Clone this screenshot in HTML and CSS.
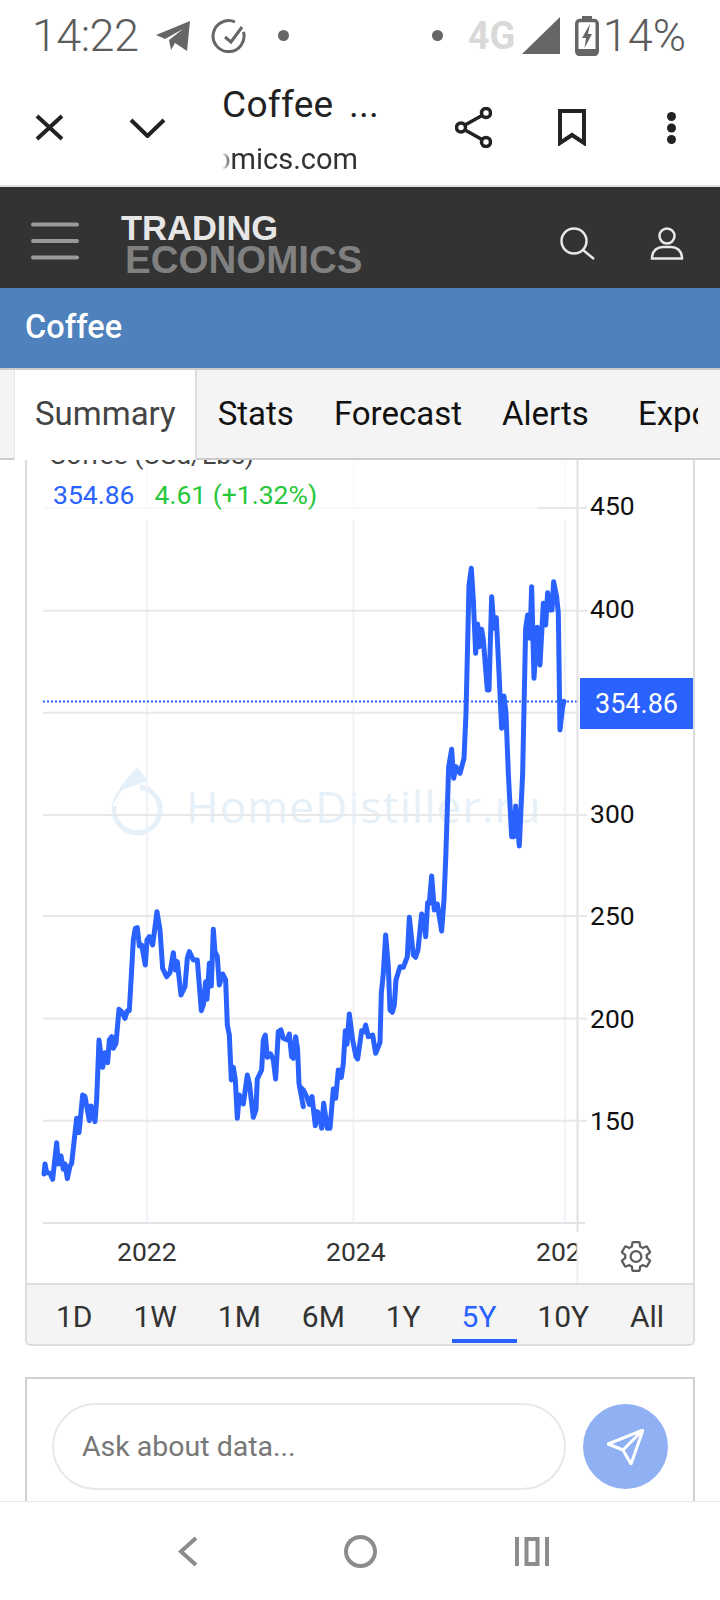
FILE: index.html
```html
<!DOCTYPE html>
<html>
	<head>
		<meta charset="utf-8" />
		<meta name="viewport" content="width=device-width,initial-scale=1" />
		<title>Coffee</title>
		<link rel="stylesheet" href="styles.css">
	</head>
	<body>
		<div class="status">
			<span class="time">14:22</span>
			<svg class="st-tele" width="34" height="30" viewBox="0 0 34 30"><path class="fill-g" d="M0 14L34 0L31 30L19 22L15 29L13 19L27 8L9 18Z"/></svg>
			<svg class="st-check" width="35" height="35" viewBox="0 0 35 35"><path class="line-g" d="M24 4A15.5 15.5 0 1 0 32.500 14"/><path class="line-g" d="M14 19L20 24L31 9"/></svg>
			<span class="dot st-dot1"></span>
			<span class="dot st-dot2"></span>
			<span class="net">4G</span>
			<svg class="st-signal" width="38" height="37" viewBox="0 0 38 37"><path class="fill-g" d="M38 0V37H0Z"/></svg>
			<svg class="st-batt" width="24" height="40" viewBox="0 0 24 40"><rect class="fill-g" x="7" y="0" width="10" height="5"/><rect class="line-g batt" x="1.750" y="4.500" width="20.500" height="34" rx="3"/><rect class="fill-g" x="2" y="33" width="20" height="6"/><path class="fill-g" d="M15 8L7 22H11L9.500 32L17 18H13Z"/></svg>
			<span class="pct">14%</span>
		</div>

		<div class="toolbar">
			<a class="tool-btn"><svg width="29" height="27" viewBox="0 0 29 27"><path class="line-d" d="M2 2L27 25M27 2L2 25"/></svg></a>
			<a class="tool-btn"><svg width="37" height="20" viewBox="0 0 37 20"><path class="line-d" d="M2 2L18.500 18L35 2"/></svg></a>
			<div class="title">
				<div class="title-main">Coffee ...</div>
				<div class="title-url"><span>tradingeconomics.com</span></div>
			</div>
			<a class="tool-btn share"><svg width="37" height="41" viewBox="0 0 37 41"><circle class="line-d thin" cx="31" cy="6" r="4.500"/><circle class="line-d thin" cx="6" cy="20.500" r="4.500"/><circle class="line-d thin" cx="31" cy="35" r="4.500"/><path class="line-d thin" d="M10 18L27 8.500M10 23L27 32.500"/></svg></a>
			<a class="tool-btn mark"><svg width="28" height="37" viewBox="0 0 28 37"><path class="line-d" d="M2 2H26V34L14 26L2 34Z"/></svg></a>
			<a class="tool-btn"><svg width="9" height="32" viewBox="0 0 9 32"><circle class="fill-d" cx="4.500" cy="4.500" r="4.500"/><circle class="fill-d" cx="4.500" cy="16" r="4.500"/><circle class="fill-d" cx="4.500" cy="27.500" r="4.500"/></svg></a>
		</div>

		<header class="site">
			<svg class="burger" width="48" height="38" viewBox="0 0 48 38"><path d="M2 2.500H46M2 19H46M2 35.500H46"/></svg>
			<div class="logo">
				<span class="logo-top">TRADING</span>
				<span class="logo-bot">ECONOMICS</span>
			</div>
			<svg class="site-search" width="35" height="33" viewBox="0 0 35 33"><circle cx="14" cy="14" r="12.500"/><path d="M23 23L34 32"/></svg>
			<svg class="site-user" width="34" height="33" viewBox="0 0 34 33"><circle cx="17" cy="9" r="7.500"/><path d="M2 31.500C2 23 8 20 13 20H21C26 20 32 23 32 31.500Z"/></svg>
		</header>

		<div class="bluebar">Coffee</div>

		<nav class="tabs">
			<div class="tab-list">
				<a class="tab on">Summary</a>
				<a class="tab">Stats</a>
				<a class="tab">Forecast</a>
				<a class="tab">Alerts</a>
				<a class="tab last">Export</a>
			</div>
		</nav>

		<main class="content">
			<section class="chart-card">
				<svg class="plot" width="666" height="823" viewBox="27 460 666 823">
					<!-- watermark -->
					<g class="wm">
						<path class="wm-ring" d="M140 787A23 23 0 1 1 114.500 806"/>
						<path class="wm-tip" d="M137 767L148 781L136 785L122 790L112 806C113 795 125 780 137 767Z"/>
						<text class="wm-text" x="186" y="823">HomeDistiller.ru</text>
					</g>
					<!-- vertical grid -->
					<path class="grid-v" d="M147 520V1222M353.500 520V1222M565 520V1222"/>
					<path class="grid-v faint" d="M147 460V506M353.500 460V506M565 460V506"/>
					<!-- horizontal grid -->
					<path class="grid-h faint" d="M43 508H537"/>
					<path class="grid-h" d="M537 508H587M43 610.700H587M43 712.700H587M43 815H587M43 916H587M43 1018.400H587M43 1120.700H587"/>
					<path class="axis-x" d="M43 1223H585"/>
					<line class="last-line" x1="43" y1="701.500" x2="578" y2="701.500"/>

					<!-- price -->
					<g transform="translate(30 880) scale(0.3333)">
						<polyline class="price" points="42,882 45,852 50,878 60,880 68,898 80,788 85,852 93,828 100,868 105,852 112,896 120,858 125,850 140,715 147,758 158,645 165,650 178,722 183,678 195,725 200,660 207,480 218,562 225,518 233,548 238,480 245,470 250,505 258,490 267,388 275,395 285,415 292,392 298,392 310,180 316,145 322,143 328,198 335,195 346,255 351,180 358,170 368,195 381,95 390,150 398,265 410,290 420,278 430,218 436,270 442,245 453,345 465,320 472,235 478,215 490,240 502,240 514,392 520,375 527,305 531,358 538,250 544,318 550,148 555,215 562,230 568,315 578,282 587,300 592,435 598,465 604,600 610,562 616,600 622,715 628,645 640,672 652,585 658,610 670,712 678,690 682,597 695,570 700,480 706,465 712,532 722,522 730,540 737,597 745,455 753,450 760,475 772,480 778,462 785,530 790,535 797,470 803,510 807,610 820,680"/>
					</g>
					<g transform="translate(300 860) scale(0.3333)">
						<polyline class="price" points="0,680 10,690 20,710 28,733 36,710 46,797 52,755 58,765 65,805 71,730 82,805 90,805 100,687 107,715 115,630 124,652 130,610 136,512 141,553 148,462 158,540 168,590 173,597 185,512 192,515 197,495 205,530 218,525 227,580 240,548 244,400 250,340 257,225 265,320 270,450 277,457 283,435 288,360 300,320 310,322 322,290 328,172 340,285 347,292 354,270 365,162 370,170 377,230 383,128 388,130 395,48 403,150 412,132 425,213 432,120 437,0"/>
					</g>
					<g transform="translate(400 540) scale(0.3333)">
						<polyline class="price" points="137,960 146,680 155,628 161,715 168,680 180,700 192,655 198,520 207,135 214,85 220,180 227,340 233,252 238,320 245,268 250,300 262,450 267,450 275,170 282,265 289,233 298,420 305,565 312,468 318,520 325,700 335,890 342,890 347,798 358,918 368,700 377,265 383,225 390,295 395,140 402,415 412,262 420,375 430,190 437,255 443,158 450,210 456,210 461,125 470,170 475,220 480,570 488,500 492,484"/>
					</g>

					<!-- legend -->
					<text class="lbl legend-name" x="49" y="464">Coffee (USd/Lbs)</text>
					<text class="lbl val" x="53" y="504">354.86</text>
					<text class="lbl chg" x="154.500" y="504">4.61 (+1.32%)</text>

					<!-- years -->
					<text class="lbl yr" x="117" y="1261">2022</text>
					<text class="lbl yr" x="326" y="1261">2024</text>
					<text class="lbl yr" x="536" y="1261">2026</text>

					<!-- price axis -->
					<rect class="axis-bg" x="577" y="460" width="116" height="823"/>
					<path class="axis-y" d="M577.500 460V1232"/>
					<path class="axis-y light" d="M577.500 1241V1283"/>
					<path class="grid-h" d="M577 508H587M577 610.700H587M577 815H587M577 916H587M577 1018.400H587M577 1120.700H587"/>
					<path class="axis-x" d="M578 1223H585"/>
					<text class="lbl px" x="590" y="515">450</text>
					<text class="lbl px" x="590" y="618">400</text>
					<text class="lbl px" x="590" y="823">300</text>
					<text class="lbl px" x="590" y="925">250</text>
					<text class="lbl px" x="590" y="1028">200</text>
					<text class="lbl px" x="590" y="1130">150</text>
					<rect class="tag" x="580" y="678" width="113" height="51"/>
					<text class="lbl tag-txt" x="636.500" y="713">354.86</text>

					<g transform="translate(618 1238.500) scale(1.5)">
						<path class="gear" d="M19.140 12.940c.04-.3.06-.61.06-.94 0-.32-.02-.64-.07-.94l2.030-1.580a.49.49 0 0 0 .12-.61l-1.920-3.320a.488.488 0 0 0-.59-.22l-2.390.96c-.5-.38-1.030-.7-1.620-.94l-.36-2.540a.484.484 0 0 0-.48-.41h-3.840c-.24 0-.43.17-.47.41l-.36 2.540c-.59.24-1.130.57-1.620.94l-2.390-.96c-.22-.08-.47 0-.59.22L2.740 8.870c-.12.21-.08.47.12.61l2.030 1.580c-.05.3-.09.63-.09.94s.02.64.07.94l-2.030 1.580a.49.49 0 0 0-.12.61l1.920 3.320c.12.22.37.29.59.22l2.390-.96c.5.38 1.030.7 1.620.94l.36 2.540c.05.24.24.41.48.41h3.840c.24 0 .44-.17.47-.41l.36-2.540c.59-.24 1.130-.56 1.620-.94l2.390.96c.22.08.47 0 .59-.22l1.920-3.320c.12-.22.07-.47-.12-.61l-2.010-1.580zM12 15.600c-1.980 0-3.600-1.620-3.600-3.600s1.620-3.600 3.600-3.600 3.600 1.620 3.600 3.600-1.620 3.600-3.600 3.600z"/>
					</g>
				</svg>
				<div class="ranges">
					<a class="range">1D</a>
					<a class="range">1W</a>
					<a class="range">1M</a>
					<a class="range">6M</a>
					<a class="range">1Y</a>
					<a class="range on">5Y</a>
					<a class="range">10Y</a>
					<a class="range">All</a>
				</div>
			</section>

			<section class="ask-card">
				<div class="ask-input">Ask about data...</div>
				<a class="ask-send"><svg width="37" height="36" viewBox="0 0 37 36"><path d="M36 1L1 15L16 21L24 35ZM36 1L16 21"/></svg></a>
			</section>
		</main>

		<footer class="nav">
			<a class="nav-btn"><svg width="20" height="31" viewBox="0 0 20 31"><path d="M18 2L3 15.500L18 29"/></svg></a>
			<a class="nav-btn"><svg width="33" height="33" viewBox="0 0 33 33"><circle cx="16.500" cy="16.500" r="14.500"/></svg></a>
			<a class="nav-btn"><svg width="34" height="29" viewBox="0 0 34 29"><path d="M2 0V29M32 0V29"/><rect x="11.500" y="2" width="11" height="25"/></svg></a>
		</footer>
	</body>
</html>
```

FILE: styles.css
```css
*{margin: 0;padding: 0;box-sizing: border-box;}
html,body{width: 720px;height: 1600px;overflow: hidden;background: #fff;}
body{display: flex;flex-direction: column;font-family: Roboto, "Liberation Sans", sans-serif;color: #111;}
a{display: block;text-decoration: none;color: inherit;}
svg{display: block;flex: none;}

.fill-g{fill: #666;}
.fill-d{fill: #222;}
.line-g{fill: none;stroke: #666;stroke-width: 3;}
.line-g.batt{stroke-width: 3.500;}
.line-d{fill: none;stroke: #222;stroke-width: 4;}
.line-d.thin{stroke-width: 3.5;}

/* status bar */
.status{display: flex;align-items: center;height: 75px;padding: 0 34px 4px 32px;color: #5c5c5c;flex: none;}
.time{font-size: 45px;font-weight: 300;letter-spacing: -.6px;width: 106px;white-space: nowrap;}
.st-tele{margin-left: 18px;}
.st-check{margin-left: 21px;}
.dot{width: 11px;height: 11px;border-radius: 50%;background: #666;}
.st-dot1{margin-left: 32px;}
.st-dot2{margin-left: auto;}
.net{font-size: 38px;font-weight: 700;color: #d9d9d9;margin-left: 25px;width: 47px;}
.st-signal{margin-left: 7px;}
.st-batt{margin-left: 15px;}
.pct{font-size: 45px;font-weight: 300;margin-left: 4px;}

/* browser toolbar */
.toolbar{display: flex;align-items: center;height: 112px;border-bottom: 2px solid #dfe3e8;flex: none;}
.tool-btn{display: flex;align-items: center;justify-content: center;width: 98px;height: 100%;flex: none;padding-bottom: 5px;}
.tool-btn.share{padding-right: 4px;}
.tool-btn.mark{padding-right: 2px;}
.title{flex: 1;padding: 5px 0 0 26px;}
.title-main{font-size: 37px;line-height: 42px;color: #222;margin-top: -5px;word-spacing: 6px;letter-spacing: .3px;}
.title-url{display: flex;justify-content: flex-end;width: 136px;overflow: hidden;white-space: nowrap;font-size: 29px;line-height: 34px;margin-top: 16px;color: #333;-webkit-mask-image: linear-gradient(to right, transparent, #000 10px);mask-image: linear-gradient(to right, transparent, #000 10px);}
.title-url span{flex: none;}

/* site header */
.site{display: flex;align-items: center;height: 101px;padding: 0 36px 0 31px;background: #333;flex: none;}
.burger{margin-top: 6px;fill: none;stroke: #999;stroke-width: 4;stroke-linecap: round;}
.logo{margin-left: 42px;margin-top: 12px;font-family: "Liberation Sans", Arial, sans-serif;font-weight: 700;}
.logo span{display: block;height: 29px;}
.logo-top{font-size: 34.500px;line-height: 26px;color: #e6e6e6;}
.logo-bot{font-size: 38.500px;line-height: 32px;color: #808080;margin-left: 4px;}
.site-search{margin-left: auto;margin-top: 11px;fill: none;stroke: #e8e8e8;stroke-width: 2.500;}
.site-user{margin-left: 55px;margin-top: 11px;fill: none;stroke: #e8e8e8;stroke-width: 2.500;}

.bluebar{display: flex;align-items: center;height: 82px;padding: 0 25px 2px;background: #4f81bd;border-bottom: 2px solid #ccc;color: #fff;font-size: 32.500px;font-weight: 500;flex: none;}

/* tabs */
.tabs{height: 90px;padding-left: 14px;background: #f4f4f4;border-bottom: 2px solid #ccc;flex: none;}
.tab-list{display: flex;width: 684px;height: 90px;overflow: hidden;}
.tab{flex: none;padding: 0 20px;font-size: 33px;line-height: 88px;color: #111;}
.tab.on{padding: 0 19px 0 20px;margin-right: 1px;height: 90px;background: #fff;border-left: 1px solid #e6e6e6;border-right: 2px solid #ddd;color: #444;}
.tab.last{padding-left: 29px;}

/* chart */
.content{flex: 1;min-height: 0;overflow: hidden;padding: 0 25px;}
.chart-card{border: 2px solid #ddd;border-top: 0;border-radius: 0 0 6px 6px;overflow: hidden;}
.plot{background: #fff;}
.grid-v{fill: none;stroke: #eff3f8;stroke-width: 2;}
.grid-v.faint{stroke: #f9fafc;}
.grid-h{fill: none;stroke: #e8e8e8;stroke-width: 2;}
.grid-h.faint{stroke: #f8f8f8;}
.axis-x{fill: none;stroke: #e2e5e8;stroke-width: 2;}
.axis-y{fill: none;stroke: #e0e0e0;stroke-width: 2;}
.axis-y.light{stroke: #eceef0;}
.axis-bg{fill: #fff;}
.last-line{stroke: #2962ff;stroke-width: 2;stroke-dasharray: 2 2;}
.price{fill: none;stroke: #2962ff;stroke-width: 15;stroke-linejoin: round;stroke-linecap: round;}
.lbl{font-family: Roboto, "Liberation Sans", sans-serif;font-size: 26.500px;}
.legend-name{fill: #444;}
.val{fill: #2962ff;}
.chg{fill: #26c73a;}
.yr{fill: #333;}
.px{fill: #111;}
.tag{fill: #2962ff;}
.tag-txt{fill: #fff;text-anchor: middle;font-size: 27px;}
.gear{fill: none;stroke: #5c5c5c;stroke-width: 1.500;}
.wm-ring{fill: none;stroke: #e6f0f8;stroke-width: 5;}
.wm-tip{fill: #e6f0f8;}
.wm-text{font-family: "Open Sans", "Noto Sans", sans-serif;font-size: 44px;letter-spacing: 1.200px;fill: #e6f0f8;}

.ranges{display: flex;gap: 10.900px;height: 61px;padding-left: 14px;background: #f4f4f4;border-top: 2px solid #ddd;}
.range{position: relative;padding: 0 15px;font-size: 30px;line-height: 64px;color: #333;}
.range.on{color: #2962ff;}
.range.on::after{content: "";position: absolute;left: 5px;right: -6px;bottom: 1px;height: 4px;background: #2962ff;}

/* ask box */
.ask-card{display: flex;gap: 17px;margin-top: 31px;padding: 24px 25px 40px;border: 2px solid #d0d0d0;align-items: center;}
.ask-input{flex: 1;height: 87px;padding-left: 28px;border: 2px solid #e8e8e8;border-radius: 44px;font-size: 28.500px;line-height: 84px;color: #777;}
.ask-send{display: flex;align-items: center;justify-content: center;width: 85px;height: 85px;border-radius: 50%;background: #8fb0f2;flex: none;}
.ask-send svg{fill: none;stroke: #fff;stroke-width: 3;stroke-linejoin: round;}

/* android nav */
.nav{display: flex;justify-content: center;align-items: center;height: 99px;background: #fff;border-top: 1px solid #e8e8e8;flex: none;}
.nav-btn{display: flex;justify-content: center;width: 172px;}
.nav-btn svg{fill: none;stroke: #8c8c8c;stroke-width: 4;}
```
